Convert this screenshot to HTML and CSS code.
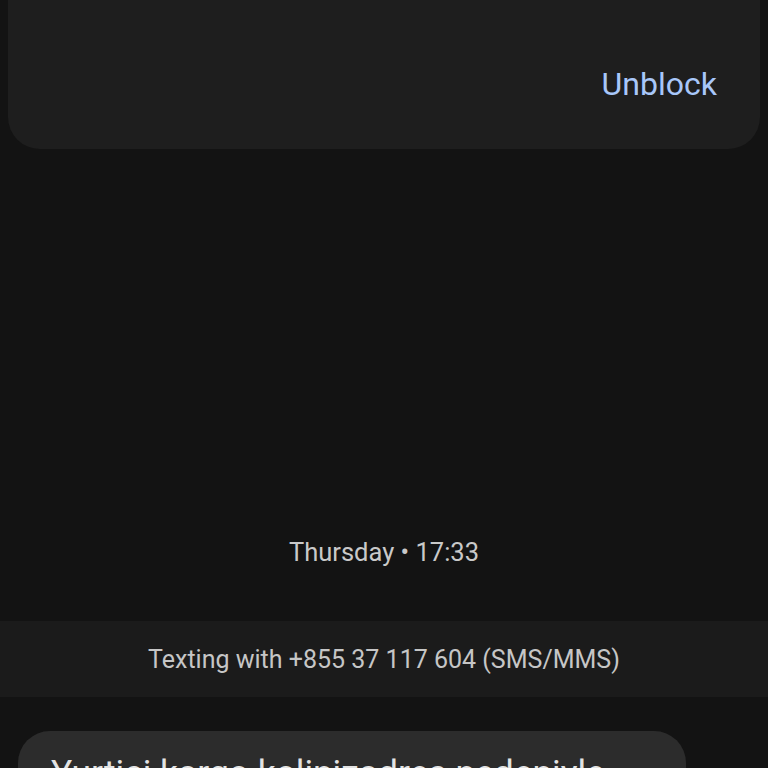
FILE: index.html
```html
<!DOCTYPE html>
<html lang="en">
<head>
  <meta charset="UTF-8" />
  <title>Conversation</title>
  <link rel="stylesheet" href="styles.css">
</head>
<body>
  <div class="blocked-card">
    <a class="unblock" href="#">Unblock</a>
  </div>

  <div class="timestamp">Thursday • 17:33</div>

  <div class="texting-band">Texting with +855 37 117 604 (SMS/MMS)</div>

  <div class="thread">
    <div class="bubble">Yurtiçi kargo kolinizadres nedeniyle teslim edilemedi, lütfen adresinizi güncelleyin</div>
  </div>
</body>
</html>
```
FILE: styles.css
```css
body {
  margin: 0;
  height: 768px;
  overflow: hidden;
  background: #131313;
  font-family: Roboto, "Liberation Sans", sans-serif;
}

.blocked-card {
  margin: 0 8px;
  height: 149px;
  box-sizing: border-box;
  background: #1e1e1e;
  border-radius: 0 0 32px 32px;
  display: flex;
  justify-content: flex-end;
  align-items: flex-start;
  padding: 64px 43px 0 0;
}

.unblock {
  color: #a8c7fa;
  text-decoration: none;
  font-size: 32px;
  line-height: 40px;
}

.timestamp {
  margin-top: 385px;
  text-align: center;
  color: #c9c9c9;
  font-size: 25.5px;
  line-height: 36px;
}

.texting-band {
  margin-top: 51px;
  height: 76px;
  background: #1b1b1b;
  display: flex;
  align-items: center;
  justify-content: center;
  color: #c6c6c6;
  font-size: 25px;
}

.thread {
  padding: 34px 0 0 18px;
}

.bubble {
  width: 668px;
  box-sizing: border-box;
  background: #2c2c2c;
  border-radius: 32px;
  padding: 19px 33px;
  color: #e3e3e3;
  font-size: 35.4px;
  line-height: 46px;
}
```
